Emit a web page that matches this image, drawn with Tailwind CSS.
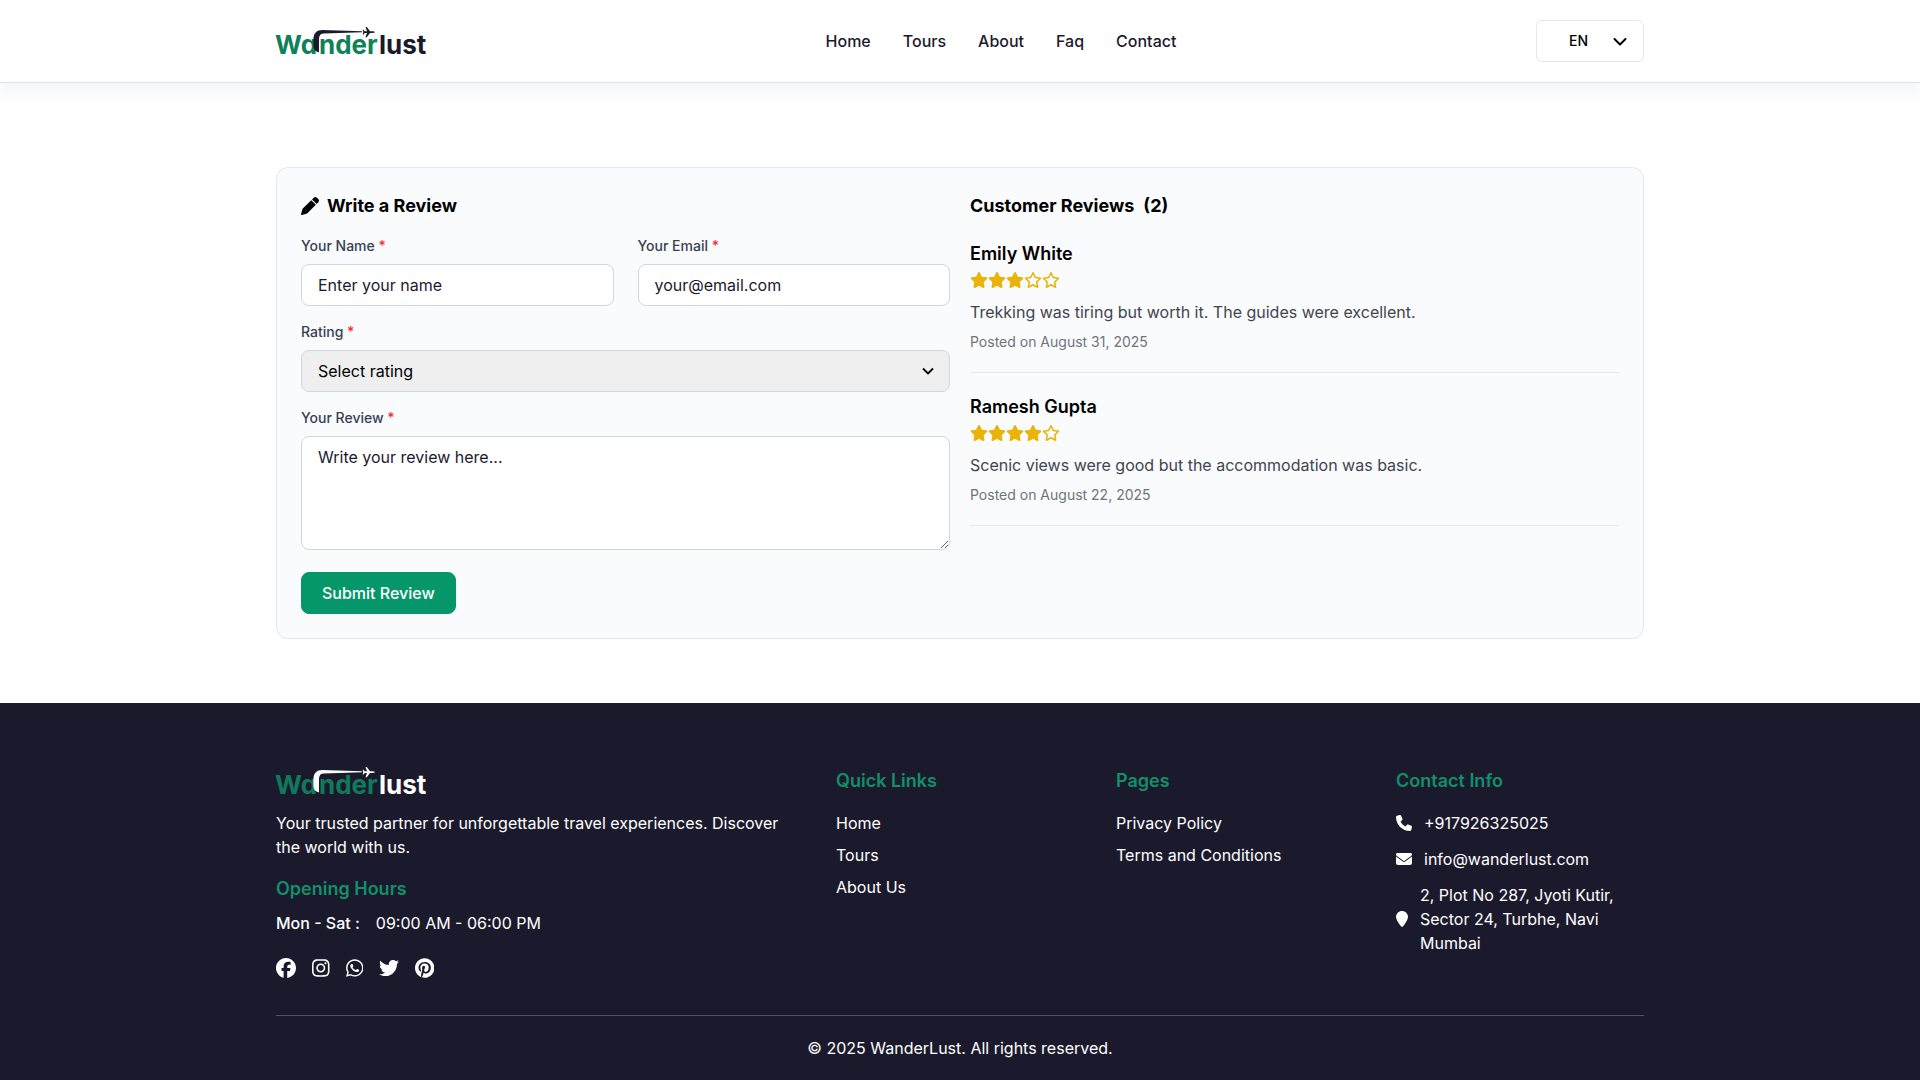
<!DOCTYPE html>
<html lang="en">
<head>
  <meta charset="UTF-8" />
  <meta name="viewport" content="width=device-width, initial-scale=1.0"/>
  <title>Wanderlust – Reviews</title>
  <script src="https://cdn.jsdelivr.net/npm/@tailwindcss/browser@4"></script>
</head>
<body class="min-h-screen bg-white font-['Inter',sans-serif] text-base text-[#1b1a2d] flex flex-col">

  <!-- Shared icons -->
  <svg class="hidden" aria-hidden="true">
    <symbol id="star" viewBox="0 0 576 512"><path d="M316.9 18C311.6 7 300.4 0 288.1 0s-23.4 7-28.8 18L195 150.3 51.4 171.5c-12 1.8-22 10.2-25.7 21.7s-.7 24.2 7.9 32.7L137.8 329 113.2 474.7c-2 12 3 24.2 12.9 31.3s23 8 33.8 2.3l128.3-68.5 128.3 68.5c10.8 5.7 23.9 4.9 33.8-2.3s14.9-19.3 12.9-31.3L438.5 329 542.7 225.9c8.6-8.5 11.7-21.2 7.9-32.7s-13.7-19.9-25.7-21.7L381.2 150.3 316.9 18z"/></symbol>
    <symbol id="star-empty" viewBox="0 0 576 512"><path d="M287.9 0c9.2 0 17.6 5.2 21.6 13.5l68.6 141.3 153.2 22.6c9 1.3 16.5 7.6 19.3 16.3s.5 18.1-5.9 24.5L433.6 328.4l26.2 155.6c1.5 9-2.2 18.1-9.7 23.5s-17.3 6-25.3 1.7l-137-73.2L151 509.1c-8.1 4.3-17.9 3.7-25.3-1.7s-11.2-14.5-9.7-23.5l26.2-155.6L31.1 218.2c-6.5-6.4-8.7-15.9-5.9-24.5s10.3-14.9 19.3-16.3l153.2-22.6L266.3 13.5C270.4 5.2 278.7 0 287.9 0zm0 79L235.4 187.2c-3.5 7.1-10.2 12.1-18.1 13.3L99 217.9 184.9 303c5.5 5.5 8.1 13.3 6.8 21L171.4 443.7l105.2-56.2c7.1-3.8 15.6-3.8 22.6 0l105.2 56.2L384.2 324.1c-1.3-7.7 1.2-15.5 6.8-21l85.9-85.1L358.6 200.5c-7.8-1.2-14.6-6.1-18.1-13.3L287.9 79z"/></symbol>
    <symbol id="swoosh" viewBox="0 0 150 28">
      <path d="M37.4 19V13C37.4 6 40.600 3 46.500 3L86 4.300V5.300L47.500 6.600C43.800 6.800 43 9.500 43 13V25.500C39.500 24.500 37.400 22.500 37.400 19z"/>
      <path d="M99 5.100C98.500 4.500 97.500 4.300 96.500 4.300H94L90.800 0H89.500L91 4.300H88.700L87.500 2.800H86.600L87.300 5.100 86.600 7.400H87.500L88.700 5.900H91L89.500 10.200H90.800L94 5.900H96.500C97.500 5.900 98.500 5.700 99 5.100z"/>
    </symbol>
  </svg>

  <!-- Header -->
  <header class="border-b border-[#dcdfe4] shadow-[0_10px_12px_3px_#f7f8fb]">
    <div class="max-w-[1400px] w-full mx-auto px-4 py-5 flex items-center justify-between">
      <a href="#" class="w-[190px]" aria-label="Wanderlust">
        <svg class="w-[150px] h-7 overflow-visible text-[26px] font-bold [font-feature-settings:'cv11']" viewBox="0 0 150 28">
          <text x="-1" y="27" fill="#0f8158">Wa</text>
          <text x="43" y="27" fill="#0f8158">nder</text>
          <text x="103" y="27" fill="#1b1a2d">lust</text>
          <use href="#swoosh" fill="#1b1a2d"/>
        </svg>
      </a>
      <nav class="flex gap-8 font-medium">
        <a href="#">Home</a>
        <a href="#">Tours</a>
        <a href="#">About</a>
        <a href="#">Faq</a>
        <a href="#">Contact</a>
      </nav>
      <button type="button" class="w-[108px] h-[42px] pl-8 pr-[15px] flex items-center justify-between rounded-md border border-gray-200 text-sm font-medium text-black">
        EN
        <svg class="w-4 h-4" viewBox="0 0 16 16" fill="none" stroke="currentColor" stroke-width="2" stroke-linecap="round" stroke-linejoin="round"><path d="M2.500 6l5.500 5.500 5.500-5.500"/></svg>
      </button>
    </div>
  </header>

  <!-- Reviews -->
  <main class="max-w-[1400px] w-full mx-auto px-4 pt-21 pb-16">
    <div class="grid grid-cols-2 gap-5 rounded-xl border border-gray-200 bg-[#fafbfd] p-6">

      <section>
        <h2 class="flex items-center gap-2 mb-4 text-lg leading-7 font-bold text-black">
          <svg class="w-[18px] h-[18px]" viewBox="0 0 512 512" fill="currentColor"><path d="M362.700 19.300L314.300 67.700 444.300 197.700l48.400-48.400c25-25 25-65.500 0-90.500L453.300 19.300c-25-25-65.500-25-90.500 0zm-71 71L58.600 323.500c-10.400 10.400-18 23.300-22.200 37.400L1 481.200C-1.500 489.700 .8 498.800 7 505s15.300 8.500 23.700 6.100l120.300-35.400c14.100-4.200 27-11.800 37.400-22.200L421.700 220.300 291.700 90.300z"/></svg>
          Write a Review
        </h2>
        <form class="flex flex-col items-start gap-4">
          <div class="w-full grid grid-cols-2 gap-6">
            <div>
              <label for="name" class="block mb-2 text-sm font-medium text-gray-700">Your Name <span class="text-red-500">*</span></label>
              <input id="name" type="text" placeholder="Enter your name" class="w-full h-[42px] px-4 rounded-lg border border-gray-300 bg-white placeholder:text-[#1b1a2d]" />
            </div>
            <div>
              <label for="email" class="block mb-2 text-sm font-medium text-gray-700">Your Email <span class="text-red-500">*</span></label>
              <input id="email" type="email" placeholder="your@email.com" class="w-full h-[42px] px-4 rounded-lg border border-gray-300 bg-white placeholder:text-[#1b1a2d]" />
            </div>
          </div>
          <div class="w-full">
            <label for="rating" class="block mb-2 text-sm font-medium text-gray-700">Rating <span class="text-red-500">*</span></label>
            <div class="relative">
              <select id="rating" class="block w-full h-[42px] px-4 appearance-none rounded-lg border border-gray-300 bg-[#efefef] text-black">
                <option value="">Select rating</option>
                <option value="5">5 Stars</option>
                <option value="4">4 Stars</option>
                <option value="3">3 Stars</option>
                <option value="2">2 Stars</option>
                <option value="1">1 Star</option>
              </select>
              <svg class="absolute right-4 inset-y-0 my-auto w-3 h-3 pointer-events-none" viewBox="0 0 12 12" fill="none" stroke="black" stroke-width="1.800"><path d="M1 3.500l5 5 5-5"/></svg>
            </div>
          </div>
          <div class="w-full mb-[6px]">
            <label for="review" class="block mb-2 text-sm font-medium text-gray-700">Your Review <span class="text-red-500">*</span></label>
            <textarea id="review" rows="4" placeholder="Write your review here..." class="block w-full px-4 py-2 rounded-lg border border-gray-300 bg-white placeholder:text-[#1b1a2d]"></textarea>
          </div>
          <button type="submit" class="px-5 py-2 rounded-lg border border-[#059669] bg-[#059669] text-white font-medium">Submit Review</button>
        </form>
      </section>

      <section>
        <h2 class="flex gap-[9px] mb-5 text-lg leading-7 font-bold text-black">Customer Reviews <span>(2)</span></h2>
        <div class="flex flex-col gap-5">
          <article class="pb-5 border-b border-gray-200">
            <h3 class="text-lg leading-7 font-semibold text-black">Emily White</h3>
            <div class="h-6 mb-2 flex items-center text-[#eab308]" role="img" aria-label="3 out of 5">
              <svg class="w-[18px] h-4" fill="currentColor"><use href="#star"/></svg>
              <svg class="w-[18px] h-4" fill="currentColor"><use href="#star"/></svg>
              <svg class="w-[18px] h-4" fill="currentColor"><use href="#star"/></svg>
              <svg class="w-[18px] h-4" fill="currentColor"><use href="#star-empty"/></svg>
              <svg class="w-[18px] h-4" fill="currentColor"><use href="#star-empty"/></svg>
            </div>
            <p class="mb-2 text-[#40454f]">Trekking was tiring but worth it. The guides were excellent.</p>
            <p class="text-sm text-[#6f737b]">Posted on August 31, 2025</p>
          </article>
          <article class="pb-5 border-b border-gray-200">
            <h3 class="text-lg leading-7 font-semibold text-black">Ramesh Gupta</h3>
            <div class="h-6 mb-2 flex items-center text-[#eab308]" role="img" aria-label="4 out of 5">
              <svg class="w-[18px] h-4" fill="currentColor"><use href="#star"/></svg>
              <svg class="w-[18px] h-4" fill="currentColor"><use href="#star"/></svg>
              <svg class="w-[18px] h-4" fill="currentColor"><use href="#star"/></svg>
              <svg class="w-[18px] h-4" fill="currentColor"><use href="#star"/></svg>
              <svg class="w-[18px] h-4" fill="currentColor"><use href="#star-empty"/></svg>
            </div>
            <p class="mb-2 text-[#40454f]">Scenic views were good but the accommodation was basic.</p>
            <p class="text-sm text-[#6f737b]">Posted on August 22, 2025</p>
          </article>
        </div>
      </section>
    </div>
  </main>

  <!-- Footer -->
  <footer class="grow bg-[#1b1a2d] text-white">
    <div class="max-w-[1400px] w-full mx-auto px-4 pt-16">
      <div class="grid grid-cols-5 gap-8 pb-[34px] border-b border-gray-600">
        <div class="col-span-2">
          <a href="#" class="block mb-4" aria-label="Wanderlust">
            <svg class="w-[150px] h-7 overflow-visible text-[26px] font-bold [font-feature-settings:'cv11']" viewBox="0 0 150 28">
              <text x="-1" y="27" fill="#0f7a5c">Wa</text>
              <text x="43" y="27" fill="#0f7a5c">nder</text>
              <text x="103" y="27" fill="#ffffff">lust</text>
              <use href="#swoosh" fill="#ffffff"/>
            </svg>
          </a>
          <p class="mb-4">Your trusted partner for unforgettable travel experiences. Discover the world with us.</p>
          <h3 class="mb-2 text-lg leading-7 font-semibold text-[#128f6b]">Opening Hours</h3>
          <p class="flex gap-4"><span class="font-medium">Mon - Sat :</span> <span>09:00 AM - 06:00 PM</span></p>
          <div class="mt-5 h-[26px] flex items-center gap-4">
            <a href="#" aria-label="Facebook"><svg class="h-5 w-auto" viewBox="0 0 512 512" fill="currentColor"><path d="M512 256C512 114.600 397.400 0 256 0S0 114.600 0 256C0 376 82.700 476.800 194.200 504.500V334.200H141.400V256h52.800V222.300c0-87.100 39.400-127.500 125-127.500c16.200 0 44.200 3.200 55.700 6.400V172c-6-.6-16.500-1-29.600-1c-42 0-58.200 15.900-58.200 57.200V256h83.600l-14.400 78.200H287V510.100C413.800 494.800 512 386.900 512 256h0z"/></svg></a>
            <a href="#" aria-label="Instagram"><svg class="h-5 w-auto" viewBox="0 0 448 512" fill="currentColor"><path d="M224.100 141c-63.600 0-114.900 51.300-114.900 114.900s51.300 114.900 114.900 114.900S339 319.500 339 255.900 287.700 141 224.100 141zm0 189.600c-41.100 0-74.700-33.500-74.700-74.700s33.500-74.700 74.700-74.700 74.700 33.500 74.700 74.700-33.600 74.700-74.700 74.700zm146.400-194.300c0 14.900-12 26.800-26.800 26.800-14.900 0-26.800-12-26.800-26.800s12-26.800 26.800-26.800 26.800 12 26.800 26.800zm76.100 27.200c-1.700-35.900-9.900-67.700-36.200-93.900-26.200-26.200-58-34.400-93.900-36.200-37-2.100-147.900-2.100-184.900 0-35.800 1.700-67.600 9.900-93.900 36.100s-34.400 58-36.200 93.900c-2.100 37-2.100 147.900 0 184.900 1.700 35.900 9.900 67.700 36.200 93.900s58 34.400 93.900 36.200c37 2.100 147.900 2.100 184.900 0 35.900-1.700 67.700-9.900 93.900-36.200 26.200-26.200 34.400-58 36.200-93.900 2.100-37 2.100-147.800 0-184.800zM398.800 388c-7.800 19.600-22.900 34.700-42.600 42.600-29.500 11.700-99.500 9-132.100 9s-102.700 2.600-132.100-9c-19.600-7.800-34.700-22.900-42.600-42.600-11.700-29.500-9-99.500-9-132.100s-2.600-102.700 9-132.100c7.800-19.600 22.900-34.700 42.600-42.600 29.500-11.700 99.500-9 132.100-9s102.700-2.600 132.100 9c19.600 7.800 34.700 22.900 42.600 42.600 11.700 29.500 9 99.500 9 132.100s2.700 102.700-9 132.100z"/></svg></a>
            <a href="#" aria-label="WhatsApp"><svg class="h-5 w-auto" viewBox="0 0 448 512" fill="currentColor"><path d="M380.900 97.100C339 55.100 283.200 32 223.900 32c-122.400 0-222 99.600-222 222 0 39.100 10.200 77.300 29.600 111L0 480l117.700-30.900c32.400 17.700 68.900 27 106.100 27h.1c122.300 0 224.100-99.600 224.100-222 0-59.300-25.200-115-67.100-157zm-157 341.600c-33.200 0-65.700-8.900-94-25.700l-6.700-4-69.800 18.300L72 359.200l-4.400-7c-18.500-29.400-28.200-63.300-28.200-98.200 0-101.700 82.800-184.500 184.600-184.500 49.300 0 95.600 19.200 130.400 54.100 34.800 34.900 56.200 81.200 56.100 130.500 0 101.800-84.900 184.600-186.600 184.600zm101.200-138.200c-5.500-2.800-32.800-16.200-37.900-18-5.100-1.900-8.800-2.800-12.500 2.800-3.700 5.600-14.300 18-17.600 21.800-3.200 3.700-6.500 4.200-12 1.400-32.600-16.300-54-29.100-75.500-66-5.700-9.800 5.700-9.100 16.300-30.300 1.800-3.700.9-6.900-.5-9.700-1.400-2.800-12.500-30.100-17.100-41.200-4.500-10.800-9.100-9.300-12.500-9.500-3.200-.2-6.900-.2-10.600-.2-3.700 0-9.700 1.400-14.800 6.900-5.100 5.600-19.400 19-19.400 46.300 0 27.300 19.900 53.700 22.600 57.400 2.800 3.700 39.100 59.700 94.800 83.800 35.200 15.200 49 16.500 66.600 13.900 10.700-1.600 32.800-13.400 37.400-26.400 4.600-13 4.600-24.100 3.200-26.400-1.300-2.500-5-3.900-10.500-6.600z"/></svg></a>
            <a href="#" aria-label="Twitter"><svg class="h-5 w-auto" viewBox="0 0 512 512" fill="currentColor"><path d="M459.370 151.716c.325 4.548.325 9.097.325 13.645 0 138.720-105.583 298.558-298.558 298.558-59.452 0-114.680-17.219-161.137-47.106 8.447.974 16.568 1.299 25.340 1.299 49.055 0 94.213-16.568 130.274-44.832-46.132-.975-84.792-31.188-98.112-72.772 6.498.974 12.995 1.624 19.818 1.624 9.421 0 18.843-1.300 27.614-3.573-48.081-9.747-84.143-51.980-84.143-102.985v-1.299c13.969 7.797 30.214 12.670 47.431 13.319-28.264-18.843-46.781-51.005-46.781-87.391 0-19.492 5.197-37.360 14.294-52.954 51.655 63.675 129.300 105.258 216.365 109.807-1.624-7.797-2.599-15.918-2.599-24.040 0-57.828 46.782-104.934 104.934-104.934 30.213 0 57.502 12.670 76.670 33.137 23.715-4.548 46.456-13.320 66.599-25.340-7.798 24.366-24.366 44.833-46.132 57.827 21.117-2.273 41.584-8.122 60.426-16.243-14.292 20.791-32.161 39.308-52.628 54.253z"/></svg></a>
            <a href="#" aria-label="Pinterest"><svg class="h-5 w-auto" viewBox="0 0 496 512" fill="currentColor"><path d="M496 256c0 137-111 248-248 248-25.600 0-50.200-3.900-73.400-11.100 10.100-16.500 25.200-43.500 30.800-65 3-11.600 15.400-59 15.400-59 8.100 15.400 31.700 28.500 56.800 28.500 74.800 0 128.700-68.800 128.700-154.300 0-81.900-66.900-143.200-152.900-143.200-107 0-163.900 71.800-163.900 150.100 0 36.400 19.400 81.700 50.300 96.100 4.700 2.200 7.200 1.200 8.300-3.300.8-3.400 5-20.300 6.900-28.100.6-2.500.3-4.700-1.700-7.100-10.100-12.500-18.300-35.300-18.300-56.600 0-54.700 41.400-107.600 112-107.600 60.900 0 103.600 41.500 103.600 100.900 0 67.100-33.900 113.600-78 113.600-24.300 0-42.600-20.100-36.700-44.800 7-29.500 20.500-61.300 20.500-82.600 0-19-10.200-34.900-31.400-34.900-24.900 0-44.900 25.700-44.900 60.200 0 22 7.400 36.800 7.400 36.800s-24.500 103.800-29 123.200c-5 21.400-3 51.600-.9 71.200C65.400 450.900 0 361.100 0 256 0 119 111 8 248 8s248 111 248 248z"/></svg></a>
          </div>
        </div>

        <div>
          <h3 class="mb-4 text-lg leading-7 font-semibold text-[#128f6b]">Quick Links</h3>
          <ul class="space-y-2">
            <li><a href="#">Home</a></li>
            <li><a href="#">Tours</a></li>
            <li><a href="#">About Us</a></li>
          </ul>
        </div>

        <div>
          <h3 class="mb-4 text-lg leading-7 font-semibold text-[#128f6b]">Pages</h3>
          <ul class="space-y-2">
            <li><a href="#">Privacy Policy</a></li>
            <li><a href="#">Terms and Conditions</a></li>
          </ul>
        </div>

        <div>
          <h3 class="mb-4 text-lg leading-7 font-semibold text-[#128f6b]">Contact Info</h3>
          <ul class="space-y-3">
            <li class="flex items-center gap-3">
              <svg class="h-4 w-auto shrink-0" viewBox="0 0 512 512" fill="currentColor"><path d="M164.900 24.600c-7.700-18.600-28-28.500-47.400-23.200l-88 24C12.100 30.200 0 46 0 64C0 311.400 200.600 512 448 512c18 0 33.800-12.100 38.600-29.500l24-88c5.300-19.400-4.600-39.700-23.200-47.400l-96-40c-16.300-6.800-35.200-2.100-46.300 11.600L304.700 368C234.300 334.700 177.300 277.700 144 207.300L193.300 167c13.700-11.200 18.400-30 11.600-46.300l-40-96z"/></svg>
              <a href="#">+917926325025</a>
            </li>
            <li class="flex items-center gap-3">
              <svg class="h-4 w-auto shrink-0" viewBox="0 0 512 512" fill="currentColor"><path d="M48 64C21.500 64 0 85.500 0 112c0 15.100 7.100 29.300 19.200 38.400L236.800 313.600c11.400 8.500 27 8.500 38.400 0L492.800 150.400c12.100-9.100 19.200-23.300 19.200-38.400c0-26.500-21.500-48-48-48H48zM0 176V384c0 35.300 28.700 64 64 64H448c35.300 0 64-28.700 64-64V176L294.400 339.200c-22.800 17.100-54 17.100-76.800 0L0 176z"/></svg>
              <a href="#">info@wanderlust.com</a>
            </li>
            <li class="flex items-center gap-3">
              <svg class="h-4 w-auto shrink-0" viewBox="0 0 384 512" fill="currentColor"><path d="M384 192c0 87.400-117 243-168.300 307.200c-12.300 15.300-35.100 15.300-47.400 0C117 435 0 279.400 0 192C0 86 86 0 192 0S384 86 384 192z"/></svg>
              <span>2, Plot No 287, Jyoti Kutir, Sector 24, Turbhe, Navi Mumbai</span>
            </li>
          </ul>
        </div>
      </div>
      <p class="py-5 text-center">© 2025 WanderLust. All rights reserved.</p>
    </div>
  </footer>
</body>
</html>
